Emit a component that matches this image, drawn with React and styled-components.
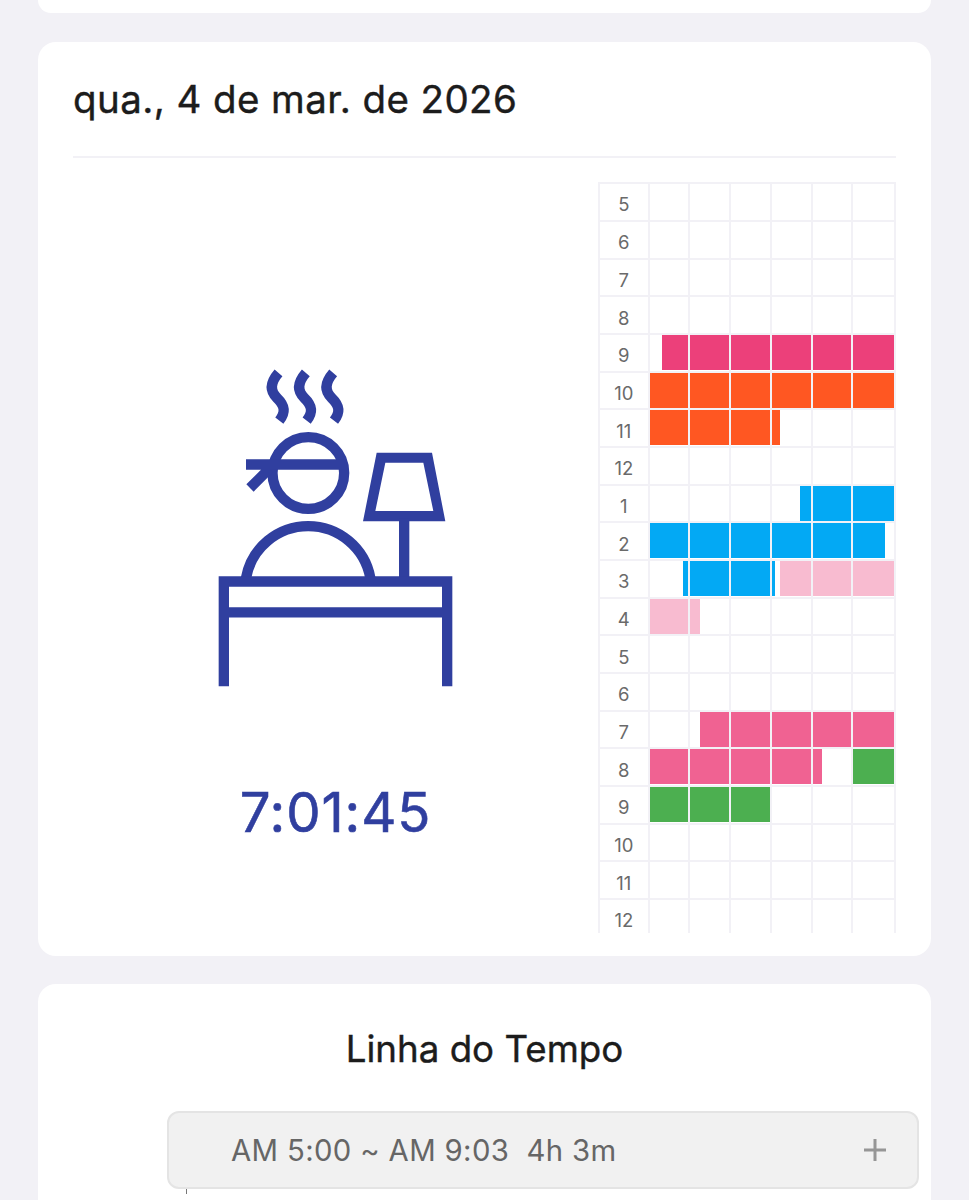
import styled, { createGlobalStyle } from 'styled-components';
import React from 'react';

const PINK = '#ec407a';
const ORANGE = '#ff5722';
const BLUE = '#03a9f4';
const LIGHT_PINK = '#f8bbd0';
const ROSE = '#f06292';
const GREEN = '#4caf50';

// from / to are pixels along the hour
const hours = [
  { label: 5 },
  { label: 6 },
  { label: 7 },
  { label: 8 },
  { label: 9, bars: [{ from: 14.5, to: 246.5, color: PINK }] },
  { label: 10, bars: [{ from: 1, to: 246.5, color: ORANGE }] },
  { label: 11, bars: [{ from: 1, to: 132.5, color: ORANGE }] },
  { label: 12 },
  { label: 1, bars: [{ from: 152.5, to: 246.5, color: BLUE }] },
  { label: 2, bars: [{ from: 1, to: 237, color: BLUE }] },
  { label: 3, bars: [{ from: 35.5, to: 127.5, color: BLUE }, { from: 132.5, to: 246.5, color: LIGHT_PINK }] },
  { label: 4, bars: [{ from: 1, to: 52.5, color: LIGHT_PINK }] },
  { label: 5 },
  { label: 6 },
  { label: 7, bars: [{ from: 52.5, to: 246.5, color: ROSE }] },
  { label: 8, bars: [{ from: 1, to: 174.3, color: ROSE }, { from: 205, to: 246.5, color: GREEN }] },
  { label: 9, bars: [{ from: 1, to: 122.3, color: GREEN }] },
  { label: 10 },
  { label: 11 },
  { label: 12 },
];

const DeskIcon = () => (
  <Icon width="270" height="350" viewBox="0 0 810 1050" fill="none" stroke="#303f9f" strokeWidth="31">
    {[0, 82, 164].map((x) => (
      <path key={x} transform={`translate(${x} 0)`} d="M235.500 68.500C211 97 209 122 231 144C256 168 257 188 238 212" />
    ))}
    <circle cx="325" cy="369" r="107.5" />
    <path d="M138 343.5H430M150 414L208 356" />
    <path d="M138 684A189.6 189.6 0 0 1 511 684" />
    <path d="M530 308H696L736 514H489ZM556 338L526 483H700L670 338Z" fill="#303f9f" fillRule="evenodd" stroke="none" />
    <path d="M612.5 505V690" />
    <path d="M71.5 1009V694.5H741.5V1009M71.5 787H741.5" />
  </Icon>
);

const App = () => {
  return (
    <>
      <GlobalStyle />
      <Page>
        <PreviousCard />
        <DayCard>
          <DateTitle>qua., 4 de mar. de 2026</DateTitle>
          <DayBody>
            <Summary>
              <DeskIcon />
              <Total>7:01:45</Total>
            </Summary>
            <HourTable>
              {hours.map((hour, i) => (
                <HourRow key={i}>
                  <HourLabel>{hour.label}</HourLabel>
                  <Track>
                    <Bars>
                      {(hour.bars || []).map((bar) => (
                        <Bar key={bar.from} $from={bar.from} $to={bar.to} $color={bar.color} />
                      ))}
                    </Bars>
                    <Cells>
                      {[0, 1, 2, 3, 4, 5].map((n) => <Cell key={n} />)}
                    </Cells>
                  </Track>
                </HourRow>
              ))}
            </HourTable>
          </DayBody>
        </DayCard>
        <TimelineCard>
          <TimelineTitle>Linha do Tempo</TimelineTitle>
          <Slot>
            <SlotText>AM 5:00 ~ AM 9:03&nbsp; 4h 3m</SlotText>
            <svg width="22" height="22" viewBox="0 0 22 22" stroke="#969696" strokeWidth="3">
              <path d="M0 11H22M11 0V22" />
            </svg>
          </Slot>
          <Tick />
        </TimelineCard>
      </Page>
    </>
  );
};

// styles

const GlobalStyle = createGlobalStyle`
  * {
    box-sizing: border-box;
  }
  body {
    margin: 0;
    background: #f2f1f6;
    font-family: Inter, "Liberation Sans", sans-serif;
    color: #1c1c1c;
  }
`;

const Page = styled.div`
  display: flex;
  flex-direction: column;
  gap: 28.3px;
  height: 1200px;
  padding: 0 37.7px;
  overflow: hidden;
`;

const Card = styled.section`
  flex: none;
  background: #fff;
  border-radius: 18px;
`;

const PreviousCard = styled(Card)`
  height: 13.3px;
  border-radius: 0 0 18px 18px;
`;

const DayCard = styled(Card)`
  height: 914px;
  padding: 0 35.3px;
`;

const DateTitle = styled.h1`
  height: 116px;
  margin: 0;
  padding-top: 33px;
  border-bottom: 2px solid #f2f1f6;
  font-size: 38.5px;
  font-weight: 400;
  line-height: 48px;
  letter-spacing: 0.41px;
  -webkit-text-stroke: 0.4px currentColor;
`;

const DayBody = styled.div`
  display: flex;
  padding-top: 24.8px;
`;

const Summary = styled.div`
  flex: 1;
  display: flex;
  flex-direction: column;
  align-items: center;
  padding-top: 167.4px;
`;

const Icon = styled.svg`
  margin-right: 2px;
`;

const Total = styled.div`
  margin-top: 78px;
  font-size: 54.5px;
  font-weight: 400;
  line-height: 68px;
  letter-spacing: 0.9px;
  color: #303f9f;
  -webkit-text-stroke: 0.6px currentColor;
`;

const HourTable = styled.div`
  width: 298px;
  height: 750.4px;
  overflow: hidden;
  border-left: 2px solid #f2f1f6;
`;

const HourRow = styled.div`
  display: flex;
  height: 37.68px;
  border-top: 2px solid #f2f1f6;
`;

const HourLabel = styled.div`
  width: 47.6px;
  padding-top: 2.1px;
  text-align: center;
  font-size: 18.5px;
  font-weight: 400;
  line-height: 36px;
  color: #6a6a6a;
`;

const Track = styled.div`
  flex: 1;
  display: grid;
`;

const Bars = styled.div`
  grid-area: 1 / 1;
  display: grid;
  padding-bottom: 0.7px;
`;

const Bar = styled.div`
  grid-area: 1 / 1;
  width: ${(props) => props.$to - props.$from}px;
  margin-left: ${(props) => props.$from}px;
  background: ${(props) => props.$color};
`;

const Cells = styled.div`
  grid-area: 1 / 1;
  display: grid;
  grid-template-columns: repeat(5, 40.75px) 1fr;
  border-right: 2px solid #f2f1f6;
`;

const Cell = styled.div`
  border-left: 2px solid #f2f1f6;
`;

const TimelineCard = styled(Card)`
  height: 300px;
  padding: 0 12.3px 0 129.8px;
`;

const TimelineTitle = styled.h2`
  margin: 0 0 0 -117.5px;
  padding-top: 42px;
  height: 127.5px;
  text-align: center;
  font-size: 36.7px;
  font-weight: 400;
  line-height: 46px;
  -webkit-text-stroke: 0.4px currentColor;
`;

const Slot = styled.div`
  display: flex;
  align-items: center;
  justify-content: space-between;
  height: 77.6px;
  padding: 0 31px 0 61.5px;
  background: #f1f1f1;
  border: 2px solid #e4e4e4;
  border-radius: 12px;
`;

const SlotText = styled.span`
  font-size: 29.3px;
  letter-spacing: 0.36px;
  color: #666;
`;

const Tick = styled.div`
  width: 1px;
  height: 5px;
  margin-left: 19px;
  background: #777;
`;

export default App;
